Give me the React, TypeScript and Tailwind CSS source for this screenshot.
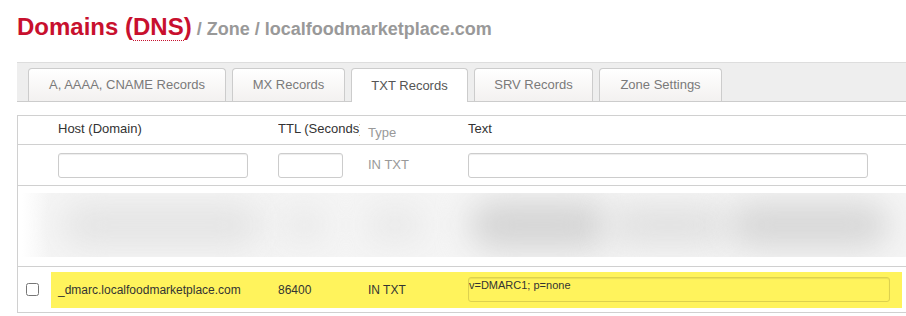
import React from "react";

const tabs = [
  { label: "A, AAAA, CNAME Records", width: "w-[198px]", active: false },
  { label: "MX Records", width: "w-[113px]", active: false },
  { label: "TXT Records", width: "w-[117px]", active: true },
  { label: "SRV Records", width: "w-[119px]", active: false },
  { label: "Zone Settings", width: "w-[123px]", active: false },
];

const Tabs = () => {
  return (
    <div className="flex items-end gap-[6px] pl-[11px] h-[40px] bg-[#eeeeee] border-t border-t-[#dddddd] border-b border-b-[#cccccc]">
      {tabs.map((tab) =>
        tab.active ? (
          <div
            key={tab.label}
            className={`${tab.width} h-[34px] -mb-px flex items-center justify-center bg-white border border-b-0 border-[#cccccc] rounded-t-[4px] text-[13px] text-[#555555]`}
          >
            {tab.label}
          </div>
        ) : (
          <div
            key={tab.label}
            className={`${tab.width} h-[33px] flex items-center justify-center bg-linear-to-b from-white to-[#f3f1f0] border border-b-0 border-[#cccccc] rounded-t-[4px] text-[13px] text-[#7a7a7a]`}
          >
            {tab.label}
          </div>
        )
      )}
    </div>
  );
};

const inputCls =
  "h-[25px] bg-white border border-[#cccccc] rounded-[3px] shadow-[inset_0_1px_1px_rgba(0,0,0,0.075)]";

const App = () => {
  return (
    <div className="w-[906px] h-[316px] overflow-hidden bg-white pl-[17px] font-['Liberation_Sans',Arial,sans-serif]">
      {/* page title */}
      <div className="h-[62px] pt-[13px]">
        <h1 className="flex items-baseline leading-[28px]">
          <span className="text-[24px] font-bold text-[#c8102e]">
            Domains (
            <abbr
              title="Domain Name System"
              className="no-underline border-b border-dotted border-[#c8102e]"
            >
              DNS
            </abbr>
            )
          </span>
          <span className="ml-[5px] text-[18px] font-bold text-[#999999]">
            / Zone / localfoodmarketplace.com
          </span>
        </h1>
      </div>

      <Tabs />

      {/* records table */}
      <div className="mt-[13px] border-t border-l border-[#d0d0d0] text-[#333333]">
        {/* header */}
        <div className="h-[29px] border-b border-[#d0d0d0] grid grid-cols-[33px_220px_90px_100px_1fr] text-[13px] leading-[15px]">
          <div />
          <div className="pl-[7px] pt-[5px]">Host (Domain)</div>
          <div className="pl-[7px] pt-[5px]">
            <div className="w-[82px] overflow-hidden whitespace-nowrap">TTL (Seconds)</div>
          </div>
          <div className="pl-[7px] pt-[9px] text-[#999999]">Type</div>
          <div className="pl-[7px] pt-[5px]">Text</div>
        </div>

        {/* filters */}
        <div className="h-[41px] border-b border-[#d0d0d0] grid grid-cols-[33px_220px_90px_100px_1fr] items-center text-[13px]">
          <div />
          <div className="pl-[7px]">
            <div className={`w-[190px] ${inputCls}`} />
          </div>
          <div className="pl-[7px]">
            <div className={`w-[65px] ${inputCls}`} />
          </div>
          <div className="pl-[7px] text-[#999999]">IN TXT</div>
          <div className="pl-[7px]">
            <div className={`w-[400px] ${inputCls}`} />
          </div>
        </div>

        {/* redacted record */}
        <div className="h-[81px] border-b border-[#d0d0d0] pt-[7px] pl-[4px]">
          <div className="h-[64px] bg-linear-to-r from-white via-[#f5f5f5] via-[3%] to-[#f5f5f5] flex items-center overflow-hidden">
            <div className="ml-[40px] w-[200px] h-[44px] rounded-full bg-[#e4e4e4] blur-lg" />
            <div className="ml-[20px] w-[44px] h-[34px] rounded-full bg-[#e8e8e8] blur-lg" />
            <div className="ml-[40px] w-[58px] h-[34px] rounded-full bg-[#e8e8e8] blur-lg" />
            <div className="ml-[45px] w-[140px] h-[48px] rounded-full bg-[#d4d4d4] blur-lg" />
            <div className="w-[120px] h-[40px] rounded-full bg-[#e0e0e0] blur-lg" />
            <div className="w-[160px] h-[44px] rounded-full bg-[#d6d6d6] blur-lg" />
          </div>
        </div>

        {/* highlighted record */}
        <div className="h-[46px] border-b border-[#d0d0d0] flex items-center">
          <div className="w-[33px] pl-[8px] flex items-center">
            <input type="checkbox" className="w-[13px] h-[13px] m-0" />
          </div>
          <div className="flex-1 mr-[4px] h-[36px] bg-[#fff35c] grid grid-cols-[220px_90px_100px_1fr] items-center text-[12px]">
            <div className="pl-[7px]">_dmarc.localfoodmarketplace.com</div>
            <div className="pl-[7px]">86400</div>
            <div className="pl-[7px]">IN TXT</div>
            <div className="pl-[7px] pr-[12px]">
              <div className="h-[25px] border border-[#ddd14e] rounded-[3px] shadow-[inset_0_1px_1px_rgba(0,0,0,0.08)] text-[11px] leading-[13px] pt-[1px] text-[#333333]">
                v=DMARC1; p=none
              </div>
            </div>
          </div>
        </div>
      </div>
    </div>
  );
};

export default App;
